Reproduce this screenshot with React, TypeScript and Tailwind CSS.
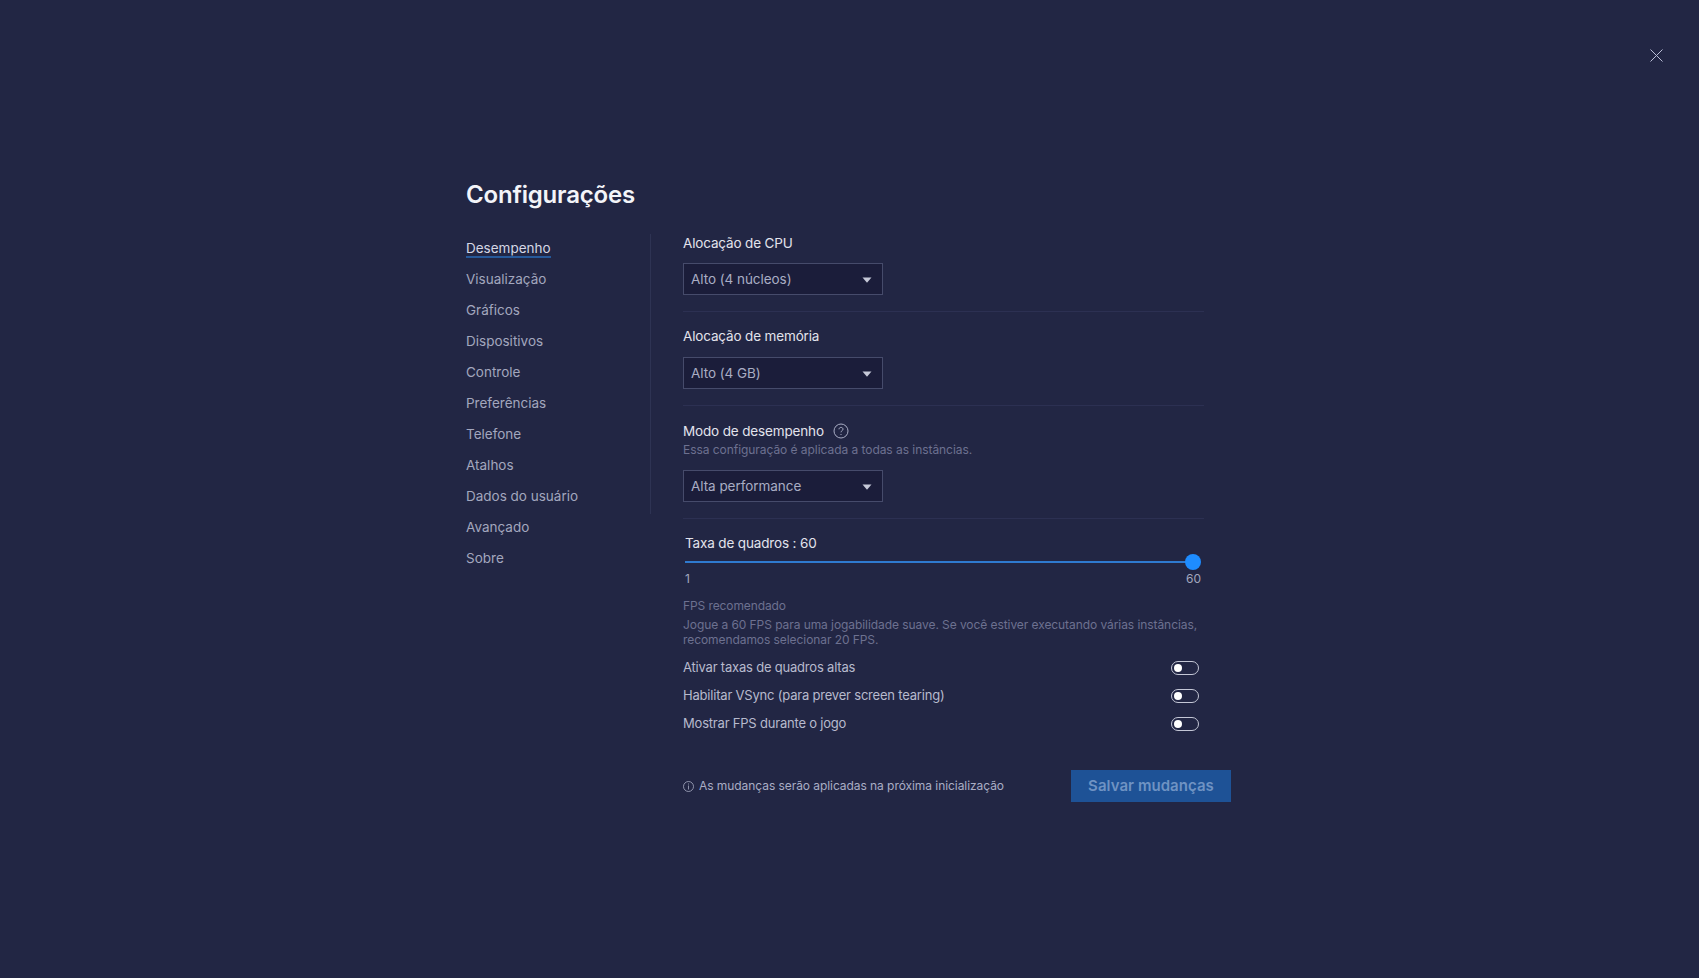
import React from "react";

const nav = ["Desempenho","Visualização","Gráficos","Dispositivos","Controle","Preferências","Telefone","Atalhos","Dados do usuário","Avançado","Sobre"];

function Select({ label }: { label: string }) {
  return (
    <div className="flex h-[32px] w-[200px] items-center justify-between border border-[#464b6b] bg-[#1b1d3a] pl-[7px] pr-[10px] text-[13.5px] tracking-[-0.05px] text-[#a9adc4]">
      <span>{label}</span>
      <svg className="mt-[2px]" width="10" height="6" viewBox="0 0 10 6"><path d="M0.500 0.500h9L5 5.800z" fill="#c6c9d8" /></svg>
    </div>
  );
}

function Toggle() {
  return (
    <div className="mr-[5px] flex h-[14px] w-[28px] items-center rounded-full border border-[#c4c7d6] pl-[2px]">
      <div className="h-[8px] w-[8px] rounded-full bg-white" />
    </div>
  );
}

function Row({ label, mt }: { label: string; mt: string }) {
  return (
    <div className={`flex h-[20px] items-center justify-between text-[13px] tracking-[-0.2px] text-[#b7bacd] ${mt}`}>
      <span>{label}</span>
      <Toggle />
    </div>
  );
}

export default function App() {
  return (
    <div className="relative h-[978px] w-full overflow-hidden bg-[#222644] pl-[466px] pt-[179px] [font-family:Inter,'Liberation_Sans',sans-serif]">
      <svg className="absolute left-[1650px] top-[49px]" width="13" height="13" viewBox="0 0 13 13">
        <path d="M0.500 0.500l12 12M12.500 0.500l-12 12" stroke="#b9bdd6" strokeWidth="1" fill="none" />
      </svg>
      <h1 className="h-[32px] text-[24px] font-semibold leading-[32px] tracking-[-0.2px] text-[#f3f4f9]">Configurações</h1>
      <div className="mt-[23px] flex">
        <nav className="-mt-[2px] w-[184px] shrink-0 self-start text-[13.5px] text-[#a3a7be]">
          {nav.map((n, i) => (
            <div key={n} className="flex h-[31px] items-center">
              <span className={i === 0 ? "translate-y-[0.5px] border-b border-[#2b8cf0] leading-[18px] text-[#d5d7e4]" : "leading-[18px]"}>{n}</span>
            </div>
          ))}
        </nav>
        <div className="h-[280px] w-px shrink-0 bg-[#2e3353]" />
        <main className="ml-[32px] w-[548px]">
          <div className="w-[521px]">
            <div className="text-[13.5px] leading-[18px] tracking-[-0.15px] text-[#e2e3ec]">Alocação de CPU</div>
            <div className="mt-[11px]"><Select label="Alto (4 núcleos)" /></div>
            <div className="mt-[16px] h-px bg-[#2c3052]" />
            <div className="mt-[14px] text-[13.5px] leading-[20px] tracking-[-0.15px] text-[#e2e3ec]">Alocação de memória</div>
            <div className="mt-[11px]"><Select label="Alto (4 GB)" /></div>
            <div className="mt-[16px] h-px bg-[#2c3052]" />
            <div className="mt-[15px] flex h-[20px] items-center gap-[9px] text-[13.5px] tracking-[-0.15px] text-[#e2e3ec]">
              <span>Modo de desempenho</span>
              <svg width="16" height="16" viewBox="0 0 16 16" fill="none" stroke="#a9adc4" strokeWidth="1">
                <circle cx="8" cy="8" r="7" />
                <path d="M6 6.300c0-1.200 1-1.900 2-1.900s2 .7 2 1.800c0 1.500-2 1.500-2 3.100" />
                <path d="M8 11v1" />
              </svg>
            </div>
            <div className="text-[12px] leading-[18px] tracking-[-0.05px] text-[#6d7190]">Essa configuração é aplicada a todas as instâncias.</div>
            <div className="mt-[11px]"><Select label="Alta performance" /></div>
            <div className="mt-[16px] h-px bg-[#2c3052]" />
            <div className="ml-[2px] mt-[14px] text-[13.5px] leading-[20px] tracking-[-0.15px] text-[#e2e3ec]">Taxa de quadros : 60</div>
            <div className="relative ml-[2px] mt-[8px] h-[2px] w-[509px] bg-[#2f7ad0]">
              <div className="absolute right-[-7px] top-[-7px] h-[16px] w-[16px] rounded-full bg-[#1e8cff]" />
            </div>
            <div className="ml-[2px] mt-[8px] flex w-[516px] justify-between text-[12px] leading-[16px] text-[#a3a7be]">
              <span>1</span><span>60</span>
            </div>
            <div className="mt-[10px] text-[12px] leading-[18px] tracking-[-0.1px] text-[#6d7190]">FPS recomendado</div>
            <div className="mt-[2px] whitespace-nowrap text-[12px] leading-[15px] tracking-[-0.07px] text-[#6d7190]">
              Jogue a 60 FPS para uma jogabilidade suave. Se você estiver executando várias instâncias,<br />
              recomendamos selecionar 20 FPS.
            </div>
            <Row label="Ativar taxas de quadros altas" mt="mt-[11px]" />
            <Row label="Habilitar VSync (para prever screen tearing)" mt="mt-[8px]" />
            <Row label="Mostrar FPS durante o jogo" mt="mt-[8px]" />
          </div>
          <div className="mt-[36px] flex h-[32px] items-center justify-between">
            <div className="flex items-center gap-[5px] text-[12px] tracking-[-0.06px] text-[#a9adc4]">
              <svg width="11" height="11" viewBox="0 0 11 11" fill="none" stroke="#a9adc4" strokeWidth="0.8">
                <circle cx="5.500" cy="5.500" r="5" />
                <path d="M5.500 4.500v4M5.500 2.500v1" />
              </svg>
              <span>As mudanças serão aplicadas na próxima inicialização</span>
            </div>
            <div className="flex h-[32px] w-[160px] items-center justify-center bg-[#1e5296] text-[15px] font-semibold tracking-[0.05px] text-[#6f93c3]">Salvar mudanças</div>
          </div>
        </main>
      </div>
    </div>
  );
}
